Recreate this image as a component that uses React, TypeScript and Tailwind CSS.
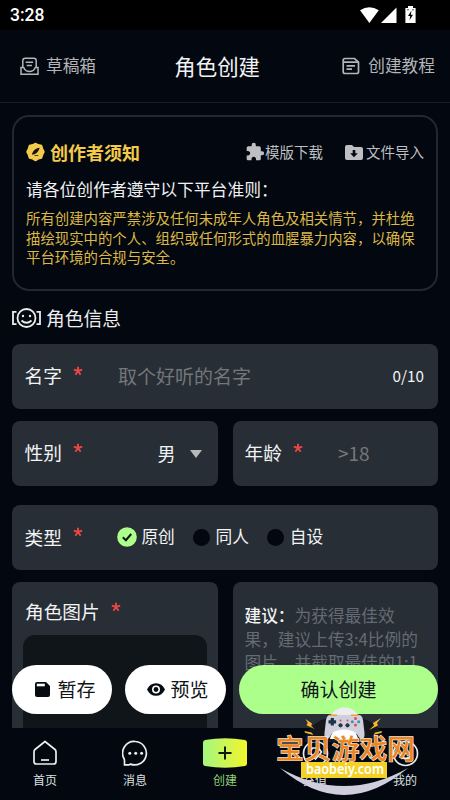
import type { ReactNode } from "react";

/**
 * CreateCharacter — 角色创建页
 */

interface FieldLabelProps {
    text: string;
}

interface NavItemProps {
    label: string;
    icon: ReactNode;
    active?: boolean;
}

function StatusBar() {
    return (
        <div className="flex h-[30px] shrink-0 items-center justify-between bg-black pl-[10px] pr-[34px] text-white">
            <span className="pt-[2px] font-[Roboto] text-[17.500px] font-medium leading-none">3:28</span>
            <svg width="57" height="18" viewBox="0 0 57 18" fill="#fff">
                <path d="M1 4.200Q10.400-1.800 19.800 4.200L10.400 17Z" />
                <path d="M37.500 1.500V17H22Z" />
                <path d="M49 0h5v2h2.600v15H46.400V2H49z" />
                <path d="M52.500 4.500 49 10h2.200l-.7 4.300L54 8.800h-2.200z" fill="#000" />
                <path d="M48 3.800h2M53 3.800h2" stroke="#555" />
            </svg>
        </div>
    );
}

function Header() {
    return (
        <header className="flex h-[73px] shrink-0 items-center justify-between border-b border-[#191e26] pl-5 pr-[15px]">
            <div className="flex items-center gap-[7px] text-[16.700px] text-[#b3b5b8]">
                <svg width="19" height="19" viewBox="0 0 19 19" fill="none" stroke="currentColor" strokeWidth="1.500">
                    <path d="M2.800 10.500V3.600Q2.800 1.200 5.200 1.200h8.600q2.400 0 2.400 2.400v6.900" />
                    <path d="M1 10.500h2.700q1.500 4 5.800 4t5.800-4H18v6.700H1z" />
                    <path d="M5.700 5.200h7.400M6.700 8.400h5.200" />
                </svg>
                <span className="-mt-px">草稿箱</span>
            </div>
            <h1 className="mr-[4px] text-[21.400px] text-[#f1f2f3]">角色创建</h1>
            <div className="flex items-center gap-2 text-[16.700px] text-[#b3b5b8]">
                <svg width="18" height="18" viewBox="0 0 18 18" fill="none" stroke="currentColor" strokeWidth="1.700">
                    <path d="M3 1.500h9.500l4 3.600V15q0 1.500-2 1.500H3.200q-2 0-2-1.500V3.300q0-1.800 1.800-1.800z" />
                    <path d="M1.500 5.200h15M4.500 8.900h8.500M4.500 12.200h5.500" />
                </svg>
                <span className="-mt-px">创建教程</span>
            </div>
        </header>
    );
}

function Notice() {
    return (
        <section className="h-[176px] rounded-[17px] border-2 border-[#23282f] px-3 pt-[21px]">
            <div className="flex h-7 items-center justify-between">
                <div className="flex items-center gap-[5px] text-[18px] font-bold text-[#f3ca4b]">
                    <svg width="19" height="20" viewBox="0 0 20 20">
                        <path
                            d="M10 1l3 1.400 3.400.7 1 3.200L19 9.900l-1.600 3.300-1 3.200-3.300.8L10 19l-3.100-1.800-3.300-.8-1-3.200L1 9.900l1.600-3.600 1-3.200L7 2.400z"
                            fill="currentColor"
                            stroke="currentColor"
                            strokeWidth="1.500"
                            strokeLinejoin="round"
                        />
                        <path d="M14.500 5.400Q8.500 6 6.200 12l.8.800q5.300-.8 7.500-7.400zM8.500 14.300h4.500v-.9H9.500z" fill="#17150c" />
                    </svg>
                    <span>创作者须知</span>
                </div>
                <div className="flex items-center text-[14.500px] text-[#bdbfc2]">
                    <svg width="20" height="20" viewBox="0 0 24 24" fill="currentColor">
                        <path d="M20.500 11H19V7c0-1.100-.9-2-2-2h-4V3.500a2.500 2.500 0 0 0-5 0V5H4c-1.100 0-1.990.9-1.990 2v3.800H3.500c1.490 0 2.700 1.210 2.700 2.700s-1.210 2.700-2.700 2.700H2V20c0 1.100.9 2 2 2h3.800v-1.500c0-1.490 1.210-2.700 2.700-2.700s2.700 1.210 2.700 2.700V22H17c1.100 0 2-.9 2-2v-4h1.500a2.500 2.500 0 0 0 0-5z" />
                    </svg>
                    <span className="mr-[22px]">模版下载</span>
                    <svg className="mr-[3px]" width="18" height="17" viewBox="0 0 18 17">
                        <path d="M2 1h5l2 2h7q2 0 2 2v9q0 2-2 2H2q-2 0-2-2V3q0-2 2-2z" fill="currentColor" />
                        <path d="M7.700 6h2.600v3.200h2.500L9 13.200 5.200 9.200h2.500z" fill="#03070f" />
                    </svg>
                    <span>文件导入</span>
                </div>
            </div>
            <p className="mt-[11px] text-[16.800px] leading-6 text-[#f0f1f2]">请各位创作者遵守以下平台准则：</p>
            <p className="mt-[7px] whitespace-nowrap text-[14.400px] leading-[19.500px] text-[#dcb846]">
                所有创建内容严禁涉及任何未成年人角色及相关情节，并杜绝
                <br />
                描绘现实中的个人、组织或任何形式的血腥暴力内容，以确保
                <br />
                平台环境的合规与安全。
            </p>
        </section>
    );
}

function FieldLabel({ text }: FieldLabelProps) {
    return (
        <div className="flex items-center gap-[11px] text-[18.700px] text-[#f2f3f4]">
            <span>{text}</span>
            <svg width="10" height="10" viewBox="0 0 10 10" stroke="#ea4744" strokeWidth="1.900" className="-mt-[9px]">
                <path d="M5 5V.7M5 5 .8 3.700M5 5l4.200-1.300M5 5 2.400 8.700M5 5l2.600 3.700" />
            </svg>
        </div>
    );
}

function TypeOption({ text, checked }: { text: string; checked?: boolean }) {
    return (
        <div className="flex items-center gap-[5px] text-[16.700px] text-[#f2f3f4]">
            {checked ? (
                <svg width="20" height="20" viewBox="0 0 20 20" className="-mr-px">
                    <circle cx="10" cy="10" r="9.800" fill="#adff8c" />
                    <path d="M5.800 10.300 8.900 13.200 14.200 7" fill="none" stroke="#0b1510" strokeWidth="2" />
                </svg>
            ) : (
                <span className="mr-px size-[17px] rounded-full bg-[#03070f]" />
            )}
            <span className="-mt-px">{text}</span>
        </div>
    );
}

function NavItem({ label, icon, active }: NavItemProps) {
    return (
        <div className="flex w-[90px] flex-col items-center pt-[9px]">
            <div className="flex h-8 items-center justify-center text-[#eceded]">{icon}</div>
            <span className={active ? "mt-[5px] text-[12px] text-[#8fd276]" : "mt-[5px] text-[12px] text-[#dfe0e1]"}>
                {label}
            </span>
        </div>
    );
}

function BottomNav() {
    return (
        <nav className="flex h-[72px] shrink-0 bg-[#03070f]">
            <NavItem
                label="首页"
                icon={
                    <svg width="26" height="26" viewBox="0 0 26 26" fill="none" stroke="currentColor" strokeWidth="1.700" strokeLinejoin="round">
                        <path d="M13 1.500 3 9.500Q2 10.300 2 12v9.500q0 2.500 2.500 2.500h17q2.500 0 2.500-2.500V12q0-1.700-1-2.500z" />
                        <path d="M9 20h8" />
                    </svg>
                }
            />
            <NavItem
                label="消息"
                icon={
                    <svg width="27" height="27" viewBox="0 0 27 27" fill="none" stroke="currentColor" strokeWidth="1.700">
                        <path d="M13.500 1.500a11.700 11.700 0 1 1-5 22.600Q8 24.800 7 24.800H2.500V21q0-1-.3-2A11.700 11.700 0 0 1 13.500 1.500z" />
                        <g fill="currentColor" stroke="none">
                            <circle cx="7.800" cy="13.300" r="1.500" />
                            <circle cx="13.700" cy="13.300" r="1.500" />
                            <circle cx="19.600" cy="13.300" r="1.500" />
                        </g>
                    </svg>
                }
            />
            <NavItem
                label="创建"
                active
                icon={
                    <svg width="46" height="32" viewBox="0 0 46 32">
                        <defs>
                            <linearGradient id="create">
                                <stop offset="0" stopColor="#a4f77e" />
                                <stop offset="1" stopColor="#f2f52c" />
                            </linearGradient>
                        </defs>
                        <path d="M3 3Q23-.600 43 3q2 .5 2 2.500v21q0 2-2 2.500-20 3.600-40 0-2-.5-2-2.500v-21Q1 3.500 3 3z" fill="url(#create)" />
                        <path d="M16.500 16h13M23 9.500v13" stroke="#11170b" strokeWidth="2" />
                    </svg>
                }
            />
            <NavItem
                label="充值"
                icon={
                    <svg width="27" height="27" viewBox="0 0 27 27" fill="none" stroke="currentColor" strokeWidth="1.700">
                        <circle cx="13.500" cy="13.500" r="12" />
                        <path d="m7.500 12 3-4h6l3 4-6 7z" />
                    </svg>
                }
            />
            <NavItem
                label="我的"
                icon={
                    <svg width="27" height="27" viewBox="0 0 27 27" fill="none" stroke="currentColor" strokeWidth="1.700">
                        <circle cx="13.500" cy="13.500" r="12" />
                        <path d="M8 16q5.500 5 11 0" />
                    </svg>
                }
            />
        </nav>
    );
}

function ActionBar() {
    return (
        <div className="absolute inset-x-3 top-[665px] flex h-[49px] gap-[13px] text-[19px] text-[#10141a]">
            <button className="flex w-[100px] items-center justify-center gap-[7px] rounded-full bg-white pb-[2px] pl-[7px]">
                <svg width="15" height="15" viewBox="0 0 15 15" className="mt-px">
                    <path d="M2 0h9l4 4v9q0 2-2 2H2q-2 0-2-2V2q0-2 2-2z" fill="#080c12" />
                    <path d="M1.800 1.700h8v2.600h-8z" fill="#fff" />
                </svg>
                <span>暂存</span>
            </button>
            <button className="flex w-[101px] items-center justify-center gap-[5px] rounded-full bg-white pb-[2px] pl-[5px]">
                <svg width="18" height="13" viewBox="0 0 18 13" className="mt-px">
                    <path d="M0 6.500Q3 .2 9 .2t9 6.300q-3 6.300-9 6.300T0 6.500z" fill="#080c12" />
                    <circle cx="9" cy="6.500" r="4" fill="#fff" />
                    <circle cx="9" cy="6.500" r="2.400" fill="#080c12" />
                </svg>
                <span>预览</span>
            </button>
            <button className="flex-1 rounded-full bg-[#adff8c] pb-[2px]">确认创建</button>
        </div>
    );
}

/* 站点水印 */
function Watermark() {
    return (
        <svg className="absolute left-[270px] top-[700px]" width="150" height="100" viewBox="0 0 150 100">
            <path d="M34 42Q40 16 74 16t42 26z" fill="#14181d" />
            <circle cx="74.500" cy="23.500" r="16" fill="#ededf1" />
            <path d="M10 68Q74 122 138 68 74 104 10 68z" fill="#cfcedd" />
            <path
                d="M60 15h29q3 0 4 5l1.500 13q.5 6-3 6-2 0-4-4-2-4-6-4H67q-4 0-6 4-2 4-4 4-3 0-2.500-6L56 20q1-5 4-5z"
                fill="#cfd0dc"
            />
            <path d="M60 39Q61 30 74 29.500 87 30 88 39z" fill="#fff" />
            <path d="M59.500 15.300h7.500M81 15.300h7.500" stroke="#e8a22e" strokeWidth="1.500" />
            <path d="M62.300 18v7.600M58.500 21.800h7.600" stroke="#1d3448" strokeWidth="3.200" />
            <g fill="#e24a55">
                <circle cx="85.500" cy="18.600" r="1.500" />
                <circle cx="85.500" cy="25" r="1.500" />
                <circle cx="70.500" cy="20.600" r="1" />
                <circle cx="77.500" cy="20.600" r="1" />
            </g>
            <g fill="#3d91b5">
                <circle cx="82.300" cy="21.800" r="1.500" />
                <circle cx="88.700" cy="21.800" r="1.500" />
            </g>
            <g fill="#24445c" stroke="#111f2b">
                <circle cx="70.500" cy="25.300" r="1.600" />
                <circle cx="77.500" cy="25.300" r="1.600" />
            </g>
            <g fill="#f5b52c">
                <path d="M35.500 19l6.500 4.500-.8 2.500 3.500 3-8.200-3.800 1.200-2.400zM111 18l-8 5 1 2.500-5 4.500 9-4.500-1-2.500zM34.500 31l7 1.500 2 2.500-8.500-2.200zM112 31l-7 1.500-1.500 2.500 8-2.200z" />
            </g>
            <text
                x="6"
                y="58.500"
                textLength="139"
                fontSize="27.700"
                fontWeight="500"
                fill="#ea8522"
                stroke="#f6ece0"
                strokeWidth="1.300"
                paintOrder="stroke"
            >
                宝贝游戏网
            </text>
            <path d="M31 62h86v16H31z" fill="#f3d126" />
            <text
                x="36"
                y="74"
                textLength="78"
                lengthAdjust="spacingAndGlyphs"
                fontSize="13.500"
                fontWeight="600"
                fontFamily="Noto Sans, sans-serif"
                fill="#fff"
            >
                baobeiy.com
            </text>
        </svg>
    );
}

export default function App() {
    return (
        <div className="relative flex h-[800px] w-[450px] flex-col overflow-hidden bg-[#03070f] font-['Noto_Sans_CJK_SC',sans-serif] leading-none">
            <StatusBar />
            <Header />

            <main className="min-h-0 flex-1 overflow-hidden px-3 pt-3">
                <Notice />

                {/* 角色信息 */}
                <div className="mt-[13px] flex h-7 items-center gap-[5px] text-[18.800px] text-[#eceded]">
                    <svg width="29" height="22" viewBox="0 0 29 22" fill="none" stroke="currentColor" strokeWidth="1.800">
                        <circle cx="14.500" cy="11" r="9" />
                        <path d="M4.500 4.800H1v12.400h3.500M24.500 4.800H28v12.400h-3.500M9.500 13.500q5 4.500 10 0" />
                        <g fill="currentColor" stroke="none">
                            <circle cx="11" cy="9" r="1.200" />
                            <circle cx="18" cy="9" r="1.200" />
                        </g>
                    </svg>
                    <h2>角色信息</h2>
                </div>

                <div className="mt-3 flex h-[65px] items-center rounded-lg bg-[#272e35] pb-[2px] pl-[12.500px] pr-[14px]">
                    <FieldLabel text="名字" />
                    <span className="ml-[35px] flex-1 text-[19px] text-[#74777a]">取个好听的名字</span>
                    <span className="text-[15.300px] text-[#f2f3f4]">0/10</span>
                </div>

                <div className="mt-3 grid h-[65px] grid-cols-2 gap-[15px]">
                    <div className="flex items-center rounded-lg bg-[#272e35] pb-[2px] pl-[12.500px] pr-4">
                        <FieldLabel text="性别" />
                        <span className="ml-auto mr-[14px] text-[18px] text-[#f2f3f4]">男</span>
                        <svg width="12" height="8" viewBox="0 0 12 8" fill="#b8babc" className="mt-[2px]">
                            <path d="M0 0h12L6 8z" />
                        </svg>
                    </div>
                    <div className="flex items-center rounded-lg bg-[#272e35] pb-[2px] pl-3">
                        <FieldLabel text="年龄" />
                        <span className="ml-[35px] text-[19px] text-[#74777a]">&gt;18</span>
                    </div>
                </div>

                <div className="mt-[19px] flex h-[65px] items-center rounded-lg bg-[#272e35] pb-px pl-[12.500px]">
                    <FieldLabel text="类型" />
                    <div className="ml-[34.500px] flex gap-[17.800px]">
                        <TypeOption text="原创" checked />
                        <TypeOption text="同人" />
                        <TypeOption text="自设" />
                    </div>
                </div>

                <div className="mt-3 grid h-[300px] grid-cols-2 gap-[15px]">
                    <div className="rounded-lg bg-[#272e35] px-[11px] pt-5">
                        <div className="pl-[2px]">
                            <FieldLabel text="角色图片" />
                        </div>
                        <div className="mt-[14px] h-[240px] rounded-xl bg-[#10151a]" />
                    </div>
                    <div className="whitespace-nowrap rounded-lg bg-[#272e35] pl-3 pt-[22px] text-[16.700px] leading-[23.500px] text-[#656a74]">
                        <span className="font-medium text-[#f2f3f4]">建议：</span>为获得最佳效
                        <br />
                        果，建议上传3:4比例的
                        <br />
                        图片。并截取最佳的1:1
                    </div>
                </div>
            </main>

            <BottomNav />
            <ActionBar />
            <Watermark />
        </div>
    );
}
